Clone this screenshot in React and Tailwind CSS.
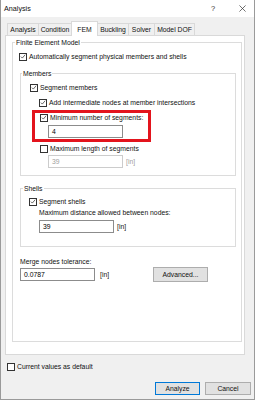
import React from 'react';

const Check = ({ checked }) => (
  <span className="w-[8px] h-[8px] shrink-0 border border-[#333] bg-white flex items-center justify-center">
    {checked && (
      <svg viewBox="0 0 8 8" className="w-[7px] h-[7px]">
        <path d="M1.2 4.2 L3.1 6.1 L6.9 1.6" stroke="#222" strokeWidth="0.9" fill="none" />
      </svg>
    )}
  </span>
);

const CheckRow = ({ checked, label, className = '' }) => (
  <div className={`flex items-center h-[9px] gap-[2px] ${className}`}>
    <Check checked={checked} />
    <span className="whitespace-nowrap">{label}</span>
  </div>
);

const Field = ({ value, disabled, w = 'w-[75px]', className = '' }) => (
  <div
    className={`${w} h-[13px] shrink-0 flex items-center pl-[3px] bg-white border ${
      disabled ? 'border-[#cccccc] text-[#a0a0a0]' : 'border-[#8c8c8c] text-black'
    } ${className}`}
  >
    {value}
  </div>
);

const tabs = [
  { name: 'Analysis', w: 'w-[32px]' },
  { name: 'Condition', w: 'w-[34px]' },
  { name: 'FEM', w: 'w-[27px]', active: true },
  { name: 'Buckling', w: 'w-[32px]' },
  { name: 'Solver', w: 'w-[27px]' },
  { name: 'Model DOF', w: 'w-[41px]' },
];

const App = () => {
  return (
    <div className="w-[255px] h-[400px] bg-[#f0f0f0] border-x border-b border-[#9a9a9a] font-['Liberation_Sans',Arial,sans-serif] text-[6.8px] leading-[9px] text-[#111] overflow-hidden">
      {/* Title bar */}
      <div className="h-[17px] bg-white flex items-center pl-[3px] text-[7.2px]">
        <span>Analysis</span>
        <span className="ml-auto w-[10px] text-center text-[7.5px] text-[#333]">?</span>
        <span className="ml-[19px] mr-[7px] w-[10px] flex justify-center">
          <svg viewBox="0 0 8 8" className="w-[7px] h-[7px]">
            <path d="M0.5 0.5 L7.5 7.5 M7.5 0.5 L0.5 7.5" stroke="#333" strokeWidth="0.8" />
          </svg>
        </span>
      </div>

      <div className="pt-[4px] pl-[4px]">
        {/* Tabs */}
        <div className="flex items-end h-[14px] ml-[2px]">
          {tabs.map((t, i) =>
            t.active ? (
              <div
                key={t.name}
                className={`${t.w} h-[15px] -mb-px -ml-px relative z-10 bg-white border-x border-t border-[#d9d9d9] flex items-center justify-center`}
              >
                {t.name}
              </div>
            ) : (
              <div
                key={t.name}
                className={`${t.w} h-[12px] ${i > 0 ? '-ml-px' : ''} bg-[#f0f0f0] border-x border-t border-[#d9d9d9] flex items-center justify-center`}
              >
                {t.name}
              </div>
            )
          )}
        </div>

        {/* Tab page */}
        <div className="w-[240px] bg-white border border-[#d9d9d9] pt-[2px] pb-[12px] pl-[6px]">
          <fieldset className="w-[230px] border border-[#dcdcdc]">
            <legend className="ml-[2px] px-[1px] leading-[9px]">Finite Element Model</legend>
            <div className="pt-[5px] pl-[7px] pb-[59px]">
              <CheckRow checked label="Automatically segment physical members and shells" className="-ml-px" />

              {/* Members */}
              <fieldset className="mt-[8px] w-[216px] border border-[#dcdcdc]">
                <legend className="ml-[1px] px-[1px] leading-[9px]">Members</legend>
                <div className="pt-[5px] pl-[9px] pb-[7px]">
                  <CheckRow checked label="Segment members" />
                  <CheckRow checked label="Add intermediate nodes at member intersections" className="mt-[6px] ml-[9px]" />
                  <div className="mt-[3px] ml-[2px] w-[119px] border-[3px] border-[#e3141d] pl-[5px] pb-[1px]">
                    <CheckRow checked label="Minimum number of segments:" />
                    <Field value="4" className="mt-[3px] ml-[8px]" />
                  </div>
                  <CheckRow label="Maximum length of segments" className="mt-[2px] ml-[10px]" />
                  <div className="mt-[2px] ml-[18px] flex items-center">
                    <Field value="39" disabled />
                    <span className="ml-[3px] text-[#a0a0a0]">[in]</span>
                  </div>
                </div>
              </fieldset>

              {/* Shells */}
              <fieldset className="mt-[8px] w-[216px] border border-[#dcdcdc]">
                <legend className="ml-[2px] px-[1px] leading-[9px]">Shells</legend>
                <div className="pt-[4px] pl-[8px] pb-[13px]">
                  <CheckRow checked label="Segment shells" />
                  <div className="mt-[2px] ml-[10px] h-[9px] whitespace-nowrap">Maximum distance allowed between nodes:</div>
                  <div className="mt-[3px] ml-[10px] flex items-center">
                    <Field value="39" />
                    <span className="ml-[3px]">[in]</span>
                  </div>
                </div>
              </fieldset>

              <div className="mt-[10px] h-[9px]">Merge nodes tolerance:</div>
              <div className="mt-[1px] h-[15px] flex items-center">
                <Field value="0.0787" />
                <span className="ml-[5px]">[in]</span>
                <button className="ml-auto mr-[33px] w-[55px] h-[15px] bg-[#e1e1e1] border border-[#adadad] flex items-center justify-center">
                  Advanced...
                </button>
              </div>
            </div>
          </fieldset>
        </div>

        <CheckRow label="Current values as default" className="mt-[7px] ml-[2px]" />

        <div className="mt-[11px] flex justify-end gap-[5px] pr-[3px]">
          <button className="w-[45px] h-[13px] bg-[#e1e1e1] border border-[#0078d7] flex items-center justify-center">
            Analyze
          </button>
          <button className="w-[46px] h-[13px] bg-[#e1e1e1] border border-[#adadad] flex items-center justify-center">
            Cancel
          </button>
        </div>
      </div>
    </div>
  );
};

export default App;
